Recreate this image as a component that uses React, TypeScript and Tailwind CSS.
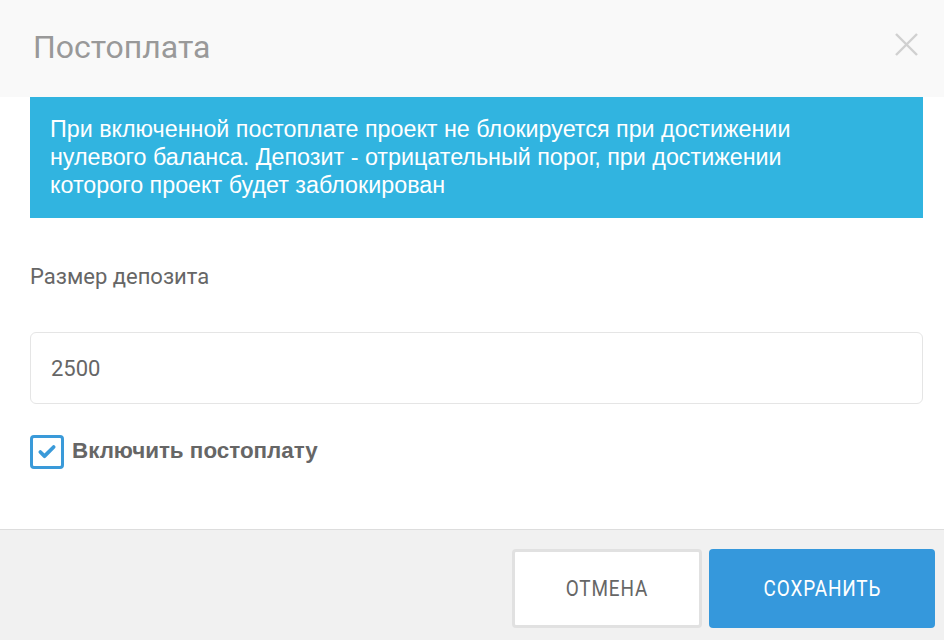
import { Check } from "lucide-react";

export default function App() {
  return (
    <div className="w-[944px] h-[640px] bg-white flex flex-col font-['Roboto',sans-serif] overflow-hidden">
      <header className="h-[97px] shrink-0 bg-[#f9f9f9] flex items-center justify-between pl-[33px] pr-[26px]">
        <h1 className="text-[32px] text-[#999999] leading-none pb-[4px]">Постоплата</h1>
        <button className="text-[#d0d0d0] pb-[8px]">
          <svg width="23" height="23" viewBox="0 0 23 23" fill="none" stroke="currentColor" strokeWidth="2.4">
            <line x1="1" y1="1" x2="22" y2="22" />
            <line x1="22" y1="1" x2="1" y2="22" />
          </svg>
        </button>
      </header>

      <main className="flex-1 px-[30px] pr-[21px]">
        <div className="bg-[#31b4e0] h-[121px] px-[20px] pt-[18px] text-white text-[23.3px] leading-[28px] font-['Liberation_Sans',sans-serif]">
          При включенной постоплате проект не блокируется при достижении
          <br />
          нулевого баланса. Депозит - отрицательный порог, при достижении
          <br />
          которого проект будет заблокирован
        </div>

        <label className="block mt-[45px] text-[22px] text-[#666666] leading-[28px]">Размер депозита</label>

        <div className="mt-[41px] h-[72px] border border-[#e5e5e5] rounded-[6px] flex items-center px-[20px] text-[22px] text-[#666666]">
          2500
        </div>

        <div className="mt-[30px] flex items-center gap-[8px]">
          <div className="w-[34px] h-[34px] border-[3px] border-[#3a9ad9] rounded-[4px] flex items-center justify-center">
            <Check className="w-[20px] h-[20px] text-[#3a9ad9]" strokeWidth={4.5} />
          </div>
          <span className="text-[22.4px] font-bold text-[#666666] font-['Liberation_Sans',sans-serif] pb-[2px]">Включить постоплату</span>
        </div>
      </main>

      <footer className="h-[111px] shrink-0 bg-[#f1f1f1] border-t border-[#dddddd] flex items-start justify-end gap-[7px] pt-[19px] pr-[9px]">
        <button className="w-[190px] h-[79px] bg-white border-[3px] border-[#e1e1e1] rounded-[4px] flex items-center justify-center text-[#666666] text-[22px] tracking-[1px]">
          <span className="inline-block scale-x-[0.86]">ОТМЕНА</span>
        </button>
        <button className="w-[226px] h-[79px] bg-[#3598dc] rounded-[4px] flex items-center justify-center text-white text-[22px] tracking-[1px]">
          <span className="inline-block scale-x-[0.86]">СОХРАНИТЬ</span>
        </button>
      </footer>
    </div>
  );
}
